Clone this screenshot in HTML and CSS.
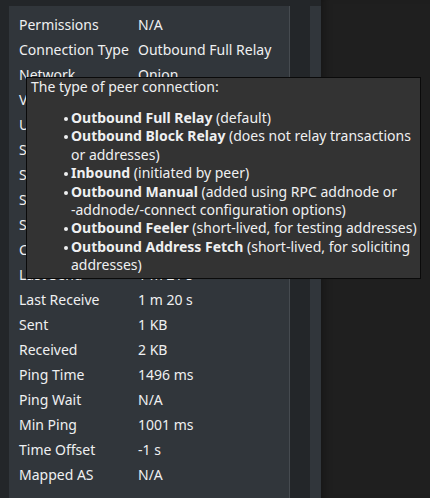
FILE: index.html
```html
<!DOCTYPE html>
<html lang="en">
<head>
  <meta charset="UTF-8" />
  <meta name="viewport" content="width=device-width, initial-scale=1" />
  <title>Peers - Node window</title>
  <link rel="stylesheet" href="styles.css">
</head>
<body>

  <div class="window">
    <div class="details-frame">
      <div class="details" role="table" aria-label="Peer details">
        <div class="row"><span class="label">Permissions</span><span class="value">N/A</span></div>
        <div class="row"><span class="label">Connection Type</span><span class="value">Outbound Full Relay</span></div>
        <div class="row"><span class="label">Network</span><span class="value">Onion</span></div>
        <div class="row"><span class="label">Version</span><span class="value">70016</span></div>
        <div class="row"><span class="label">User Agent</span><span class="value">/Satoshi:0.21.0/</span></div>
        <div class="row"><span class="label">Services</span><span class="value">NETWORK &amp; WITNESS</span></div>
        <div class="row"><span class="label">Starting Block</span><span class="value">672043</span></div>
        <div class="row"><span class="label">Synced Headers</span><span class="value">672043</span></div>
        <div class="row"><span class="label">Synced Blocks</span><span class="value">672043</span></div>
        <div class="row"><span class="label">Connection Time</span><span class="value">1 m 31 s</span></div>
        <div class="row"><span class="label">Last Send</span><span class="value">1 m 21 s</span></div>
        <div class="row"><span class="label">Last Receive</span><span class="value">1 m 20 s</span></div>
        <div class="row"><span class="label">Sent</span><span class="value">1 KB</span></div>
        <div class="row"><span class="label">Received</span><span class="value">2 KB</span></div>
        <div class="row"><span class="label">Ping Time</span><span class="value">1496 ms</span></div>
        <div class="row"><span class="label">Ping Wait</span><span class="value">N/A</span></div>
        <div class="row"><span class="label">Min Ping</span><span class="value">1001 ms</span></div>
        <div class="row"><span class="label">Time Offset</span><span class="value">-1 s</span></div>
        <div class="row"><span class="label">Mapped AS</span><span class="value">N/A</span></div>
      </div>
    </div>
    <div class="scroll-groove"></div>
    <div class="splitter"></div>
  </div>

  <div class="backdrop"></div>

  <div class="tooltip" role="tooltip">
    <p>The type of peer connection:</p>
    <ul>
      <li><b>Outbound Full Relay</b> (default)</li>
      <li><b>Outbound Block Relay</b> (does not relay transactions<br>or addresses)</li>
      <li><b>Inbound</b> (initiated by peer)</li>
      <li><b>Outbound Manual</b> (added using RPC addnode or<br>-addnode/-connect configuration options)</li>
      <li><b>Outbound Feeler</b> (short-lived, for testing addresses)</li>
      <li><b>Outbound Address Fetch</b> (short-lived, for soliciting<br>addresses)</li>
    </ul>
  </div>

</body>
</html>
```

FILE: styles.css
```css
/* Base */
*, *::before, *::after {
  box-sizing: border-box;
}

html, body {
  margin: 0; padding: 0; height: 100vh;
  background: #1f1f1f;
  font-family: 'Noto Sans', 'Open Sans', sans-serif;
  font-size: 14px;
  color: #eff0f1;
  overflow: hidden;
}

body {
  display: flex;
  position: relative;
}

/* ==========================================================
   Node window (peer details side)
   ========================================================== */
.window {
  display: flex;
  width: 321px;
  height: 100%;
  background: #232629;
  padding: 6px 0 0 9px;
}

.details-frame {
  width: 281px;
  height: 100%;
  background: #31363b;
  border-right: 1px solid #464b50;
}

.details { padding: 6px 0 0 10px; }
.row { display: flex; height: 25px; line-height: 25px; white-space: nowrap; }
.row .label { width: 119px; flex: none; }
.row .value { flex: 1; }

.scroll-groove { width: 20px; background: #232629; }
.splitter { width: 11px; background: #31363b; }

.backdrop {
  flex: 1;
  height: 100%;
  background: #1f1f1f;
  box-shadow: inset 8px 0 8px -6px rgba(0,0,0,0.35);
}

/* ==========================================================
   Tooltip
   ========================================================== */
.tooltip {
  position: absolute;
  left: 26px; top: 77px;
  width: 395px;
  background: #333333;
  border: 1px solid #0a0a0a;
  padding: 0 4px 3px;
  line-height: 18.4px;
  white-space: nowrap;
  z-index: 10;
}
.tooltip p { margin: 0 0 12.5px; }
.tooltip ul { margin: 0; padding-left: 40px; list-style: none; }
.tooltip li { position: relative; }
.tooltip li::before {
  content: '';
  position: absolute;
  left: -7px; top: 8px;
  width: 4px; height: 4px;
  border-radius: 50%;
  background: #eff0f1;
}
.tooltip b { font-weight: 700; }
```
